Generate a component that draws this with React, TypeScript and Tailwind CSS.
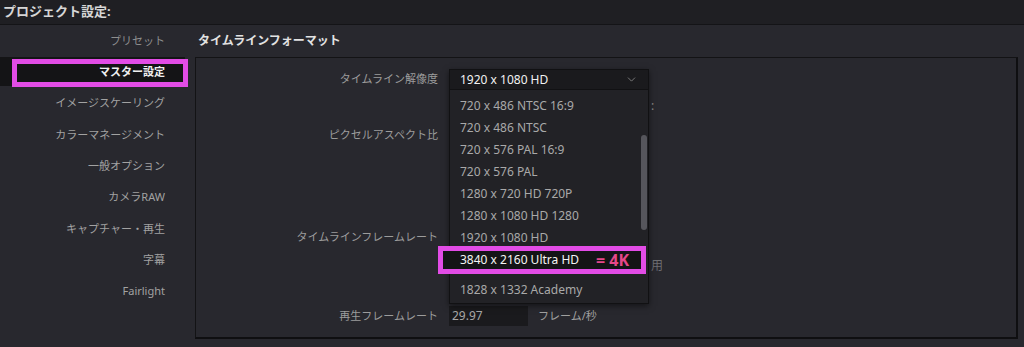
import React from "react";
import { ChevronDown } from "lucide-react";

const sidebar = [
  "イメージスケーリング",
  "カラーマネージメント",
  "一般オプション",
  "カメラRAW",
  "キャプチャー・再生",
  "字幕",
  "Fairlight",
];

const items = [
  "720 x 486 NTSC 16:9",
  "720 x 486 NTSC",
  "720 x 576 PAL 16:9",
  "720 x 576 PAL",
  "1280 x 720 HD 720P",
  "1280 x 1080 HD 1280",
  "1920 x 1080 HD",
];

export default function App() {
  return (
    <div className="w-[1024px] h-[347px] bg-[#28282e] overflow-hidden font-['Noto_Sans','Noto_Sans_CJK_JP',sans-serif] text-[11px] text-[#9c9c9c]">
      <div className="h-[25px] bg-[#1f1f23] border-b border-[#141417] flex items-center pl-[3px] text-[13px] font-bold text-[#d6d6d6]">
        プロジェクト設定:
      </div>
      <div className="flex">
        <div className="w-[195px] shrink-0 flex flex-col">
          <div className="h-[32px] flex items-center justify-end pr-[30px] text-[#8e8e8e]">プリセット</div>
          <div className="relative h-[31px]">
            <div className="absolute left-0 top-0 w-[185px] h-[29px] bg-[#141416]" />
            <div className="absolute left-[12px] top-[2px] w-[176px] h-[28px] border-[5px] border-[#e24ce6] bg-[#141416]" />
            <div className="relative h-full flex items-center justify-end pr-[30px] font-bold text-[#f0f0f0]">マスター設定</div>
          </div>
          {sidebar.map((s) => (
            <div key={s} className="h-[31.3px] flex items-center justify-end pr-[30px] text-[#a2a2a2]">
              {s}
            </div>
          ))}
        </div>
        <div className="flex-1 flex flex-col pr-[6px]">
          <div className="h-[32px] flex items-center pl-[3px] text-[12px] font-bold text-[#e2e2e2]">
            タイムラインフォーマット
          </div>
          <div className="relative h-[282px] border border-[#131315] border-r-2 border-b-2 border-r-[#0f0f11] border-b-[#0f0f11] bg-[#28282e] flex flex-col">
            <div className="mt-[11px] h-[21px] flex items-center">
              <div className="w-[242px] text-right">タイムライン解像度</div>
            </div>
            <div className="mt-[5px] h-[21px] flex items-center">
              <div className="pl-[455px] text-[#8a8a8a] text-[12px]">:</div>
            </div>
            <div className="mt-[9px] h-[21px] flex items-center">
              <div className="w-[242px] text-right">ピクセルアスペクト比</div>
            </div>
            <div className="mt-[81px] h-[21px] flex items-center">
              <div className="w-[242px] text-right">タイムラインフレームレート</div>
            </div>
            <div className="mt-[7px] h-[21px] flex items-center">
              <div className="pl-[455px] text-[#6e6e72] text-[12px]">用</div>
            </div>
            <div className="mt-[30px] h-[20px] flex items-center">
              <div className="w-[242px] text-right">再生フレームレート</div>
              <div className="ml-[11px] w-[79px] h-[20px] bg-[#1a1a1d] flex items-center pl-[3px] text-[12px] text-[#a8a8a8]">
                29.97
              </div>
              <div className="ml-[10px] text-[#a0a0a0]">フレーム/秒</div>
            </div>

            <div className="absolute left-[253px] top-[11px] w-[200px] shadow-[0_2px_6px_rgba(0,0,0,0.5)]">
              <div className="h-[21px] bg-[#1a1a1d] border border-[#111113] flex items-center justify-between pl-[10px] pr-[10px] text-[12px] text-[#f2f2f2]">
                <span>1920 x 1080 HD</span>
                <ChevronDown size={13} strokeWidth={1.5} className="text-[#8c8c8c]" />
              </div>
              <div className="relative h-[214px] bg-[#222226] border border-t-0 border-[#111113] pt-[5px] flex flex-col text-[12px] text-[#a9a9a9]">
                {items.map((t) => (
                  <div key={t} className="h-[22px] shrink-0 flex items-center pl-[10px]">
                    {t}
                  </div>
                ))}
                <div className="relative h-[24px] shrink-0">
                  <div className="absolute left-[-12px] top-[-3px] w-[208px] h-[28px] border-[5px] border-[#e24ce6] bg-[#141416] flex items-center pl-[17px] text-[#f4f4f4]">
                    <span>3840 x 2160 Ultra HD</span>
                    <span className="ml-[17px] text-[16px] font-bold text-[#e5478a]">= 4K</span>
                  </div>
                </div>
                <div className="mt-[6px] h-[22px] shrink-0 flex items-center pl-[10px]">1828 x 1332 Academy</div>
                <div className="absolute left-[191px] top-[45px] w-[6px] h-[95px] rounded-full bg-[#56565c]" />
              </div>
            </div>
          </div>
        </div>
      </div>
    </div>
  );
}
